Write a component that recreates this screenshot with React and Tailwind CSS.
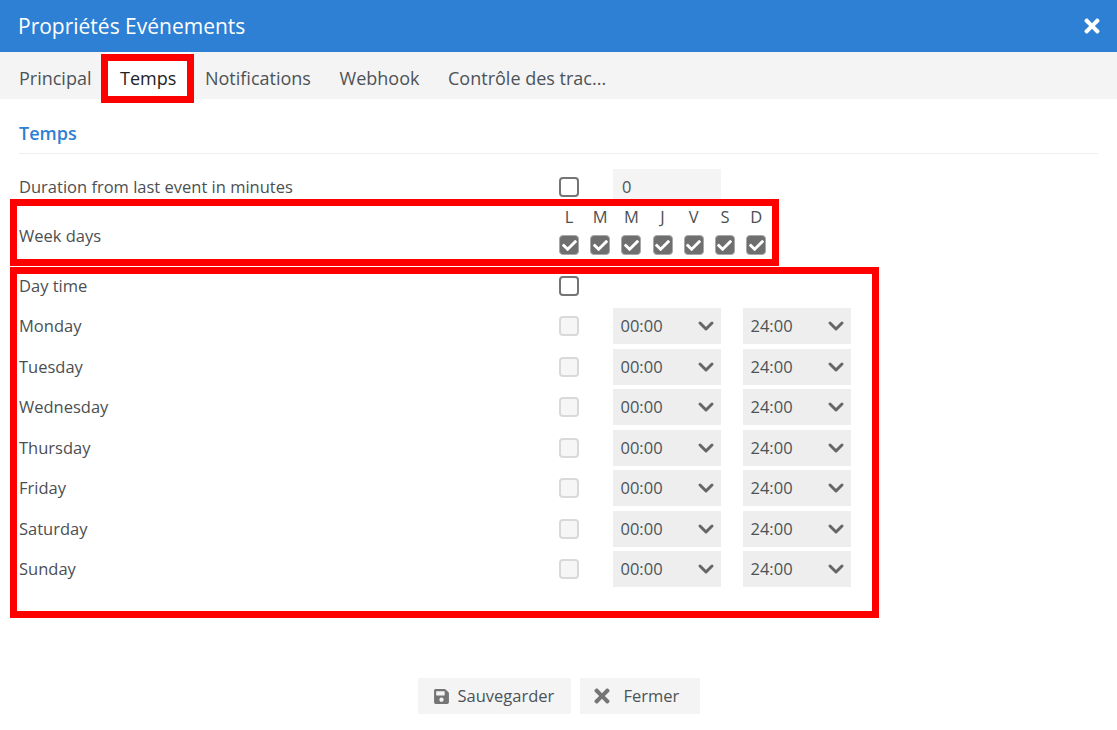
import React from "react";
import { ChevronDown } from "lucide-react";
import { FaSave, FaTimes, FaCheck } from "react-icons/fa";

const days = ["Monday", "Tuesday", "Wednesday", "Thursday", "Friday", "Saturday", "Sunday"];
const letters = ["L", "M", "M", "J", "V", "S", "D"];

function Box({ kind }) {
  if (kind === "checked")
    return (
      <span className="flex h-[20px] w-[20px] items-center justify-center rounded-[4px] border border-[#a8a8a8] bg-[#6f6f6f]">
        <FaCheck size={15} className="text-white" />
      </span>
    );
  if (kind === "disabled")
    return <span className="block h-[20px] w-[20px] rounded-[4px] border-2 border-[#d9d9d9] bg-[#f6f6f6]" />;
  return <span className="block h-[20px] w-[20px] rounded-[4px] border-2 border-[#757575] bg-white" />;
}

function Select({ value }) {
  return (
    <div className="flex h-[36px] w-[108px] items-center justify-between bg-[#eeeeee] pl-[7.5px] pr-[3px] text-[#4c5358]">
      <span>{value}</span>
      <ChevronDown size={24} strokeWidth={3} className="text-[#666666]" />
    </div>
  );
}

function Row({ label, children, className = "" }) {
  return (
    <div className={`flex items-center ${className}`}>
      <div className="w-[540px] text-[#4c4f52]">{label}</div>
      {children}
    </div>
  );
}

function Frame({ className }) {
  return <div className={`pointer-events-none absolute border-[#ff0000] ${className}`} />;
}

function Tab({ children, active }) {
  return (
    <span
      className={`flex h-full items-center px-[14.3px] pt-[5px] text-[18px] ${
        active ? "bg-white text-[#222222]" : "text-[#4c5358]"
      }`}
    >
      {children}
    </span>
  );
}

export default function App() {
  return (
    <div
      className="relative h-[730px] w-[1117px] overflow-hidden bg-white text-[16.5px] leading-[22px] text-[#4c4f52]"
      style={{ fontFamily: '"Open Sans", sans-serif' }}
    >
      <header className="flex h-[52px] items-center justify-between bg-[#2d80d4] pl-[18px] pr-[14.5px] text-white">
        <h1 className="text-[21px] font-normal">Propriétés Evénements</h1>
        <FaTimes size={22} />
      </header>

      <nav className="flex h-[47px] items-center bg-[#f4f4f4] pl-[4.7px]">
        <Tab>Principal</Tab>
        <Tab active>Temps</Tab>
        <Tab>Notifications</Tab>
        <Tab>Webhook</Tab>
        <Tab>Contrôle des trac...</Tab>
      </nav>

      <main className="px-[19px]">
        <h2 className="mt-[23px] text-[18px] font-semibold leading-[22px] text-[#2d80d4]">Temps</h2>
        <div className="mt-[9px] h-px w-[1079px] bg-[#eeeeee]" />

        <Row label="Duration from last event in minutes" className="mt-[15px] h-[36px]">
          <Box />
          <div className="ml-[34px] flex h-[36px] w-[108px] items-center bg-[#f4f4f4] pl-[9px] text-[#4c5358]">0</div>
        </Row>

        <Row label="Week days" className="mt-[4px] h-[53px]">
          <div className="-mt-[10px] flex gap-[11.2px]">
            {letters.map((l, i) => (
              <div key={i} className="flex w-[20px] flex-col items-center">
                <span className="leading-[22px]">{l}</span>
                <span className="mt-[7px]"><Box kind="checked" /></span>
              </div>
            ))}
          </div>
        </Row>

        <Row label="Day time" className="mt-[6px] h-[36px]">
          <Box />
        </Row>

        <div className="mt-[4px] flex flex-col gap-[4.5px]">
          {days.map((d) => (
            <Row key={d} label={d} className="h-[36px]">
              <Box kind="disabled" />
              <div className="ml-[34px]"><Select value="00:00" /></div>
              <div className="ml-[22px]"><Select value="24:00" /></div>
            </Row>
          ))}
        </div>
      </main>

      <footer className="mt-[91px] flex justify-center gap-[9px]">
        <button className="flex h-[36px] w-[153px] items-center justify-start gap-[8px] bg-[#f4f4f4] pl-[15px] text-[#4c5358]">
          <FaSave size={17} className="text-[#757575]" />
          Sauvegarder
        </button>
        <button className="flex h-[36px] w-[120px] items-center justify-start gap-[10.5px] bg-[#f4f4f4] pl-[11.5px] text-[#4c5358]">
          <FaTimes size={22} className="text-[#757575]" />
          Fermer
        </button>
      </footer>

      <Frame className="left-[101px] top-[54px] h-[49px] w-[93px] border-[7px]" />
      <Frame className="left-[10px] top-[199px] h-[67px] w-[769px] border-[7px]" />
      <Frame className="left-[10px] top-[267px] h-[351px] w-[869px] border-[7px]" />
    </div>
  );
}
